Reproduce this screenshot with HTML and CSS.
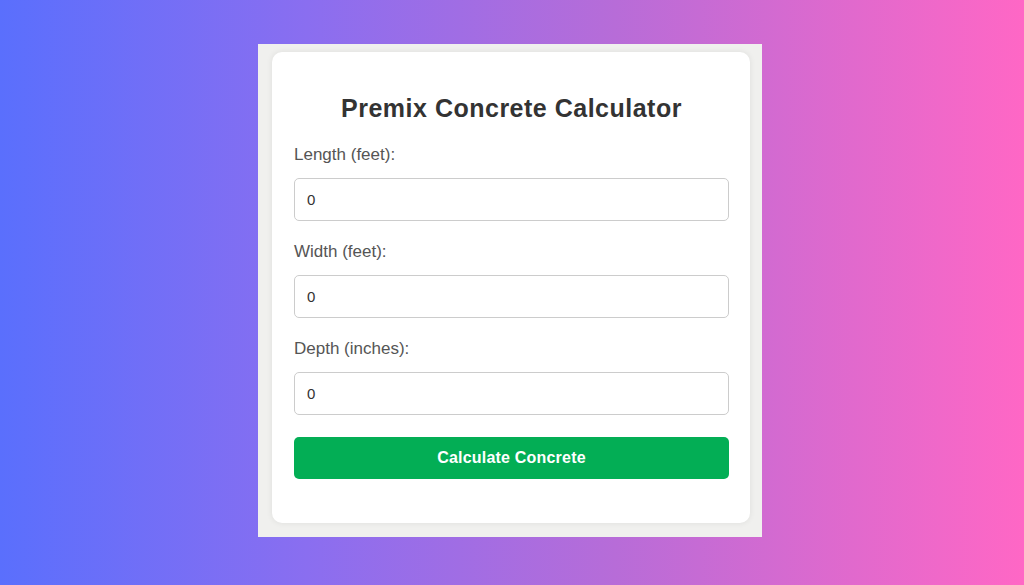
FILE: index.html
```html
<!DOCTYPE html>
<html>
<head>
<meta charset="utf-8">
<link rel="stylesheet" href="styles.css">
</head>
<body>
<div class="page">
  <div class="panel">
    <div class="card">
      <h1 class="title">Premix Concrete Calculator</h1>
      <div class="field">
        <label class="label">Length (feet):</label>
        <input class="input" type="text" value="0">
      </div>
      <div class="field">
        <label class="label">Width (feet):</label>
        <input class="input" type="text" value="0">
      </div>
      <div class="field">
        <label class="label">Depth (inches):</label>
        <input class="input" type="text" value="0">
      </div>
      <button class="btn">Calculate Concrete</button>
    </div>
  </div>
</div>
</body>
</html>
```
FILE: styles.css
```css
html, body {
  margin: 0;
  padding: 0;
}
body {
  font-family: "Liberation Sans", Arial, sans-serif;
}
.page {
  width: 1024px;
  height: 585px;
  background: linear-gradient(to right, #5a6ffd 0%, #8a6ef0 30%, #b76cd8 60%, #ff67c5 100%);
  display: flex;
  justify-content: center;
  padding-top: 44px;
  box-sizing: border-box;
}
.panel {
  width: 504px;
  height: 493px;
  background: #f0f0ee;
  box-sizing: border-box;
  padding: 8px 12px 14px 14px;
  align-self: flex-start;
  margin-right: 4px;
}
.card {
  background: #fff;
  border-radius: 10px;
  box-shadow: 0 0 6px rgba(0,0,0,0.08);
  height: 100%;
  box-sizing: border-box;
  padding: 42px 21px 0 22px;
  display: flex;
  flex-direction: column;
}
.title {
  margin: 0 0 23px 0;
  text-align: center;
  font-size: 25px;
  letter-spacing: 0.5px;
  font-weight: bold;
  color: #333;
  line-height: 28px;
}
.field {
  display: flex;
  flex-direction: column;
  margin-bottom: 21px;
}
.field:nth-of-type(3) {
  margin-bottom: 22px;
}
.label {
  font-size: 17px;
  color: #555;
  line-height: 20px;
  margin-bottom: 13px;
}
.input {
  height: 43px;
  box-sizing: border-box;
  border: 1px solid #ccc;
  border-radius: 5px;
  padding: 0 12px;
  font-family: "Liberation Sans", Arial, sans-serif;
  font-size: 15px;
  color: #333;
  outline: none;
}
.btn {
  height: 42px;
  border: none;
  border-radius: 5px;
  background: #03ae55;
  color: #fff;
  font-family: "Liberation Sans", Arial, sans-serif;
  font-size: 16px;
  letter-spacing: 0.2px;
  font-weight: bold;
}
```
